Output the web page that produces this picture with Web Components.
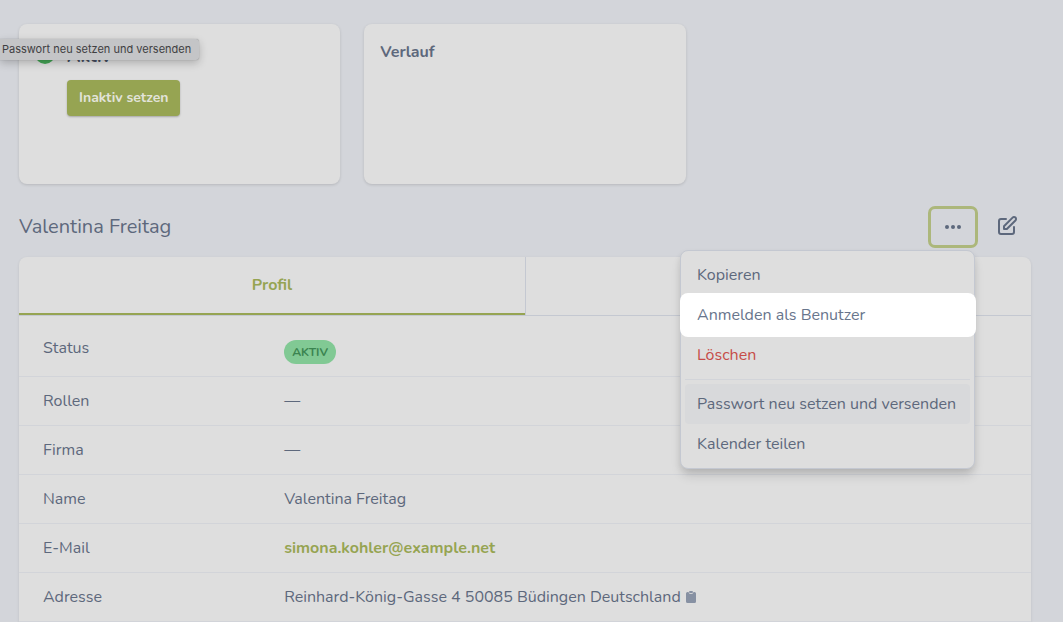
<!DOCTYPE html>
<html lang="de">
<head>
<meta charset="utf-8">
<meta name="viewport" content="width=device-width, initial-scale=1">
<title>Valentina Freitag</title>
<style>
  :root {
    --page: #d3d5da;
    --surface: #dedede;
    --ink: #5d687c;
    --accent: #96a452;
    --line: #d2d4d9;
    --line-strong: #c4c8d1;
  }
  body {
    margin: 0;
    background: var(--page);
    color: var(--ink);
    font: 400 16px/24px Nunito, "Open Sans", sans-serif;
  }
</style>
</head>
<body>
<user-page>
  <info-card slot="cards">
    <status-toggle><span>Aktiv</span><span slot="action">Inaktiv setzen</span></status-toggle>
  </info-card>
  <info-card slot="cards"><card-title>Verlauf</card-title></info-card>
  <page-header slot="header">
    Valentina Freitag
    <action-menu slot="actions"></action-menu>
    <edit-button slot="actions"></edit-button>
  </page-header>
  <tab-bar slot="panel">Profil</tab-bar>
  <profile-table slot="panel"></profile-table>
  <hint-bubble slot="hint">Passwort neu setzen und versenden</hint-bubble>
</user-page>

<script>
  function define(name, markup) {
    const template = document.createElement('template');
    template.innerHTML = markup;
    customElements.define(name, class extends HTMLElement {
      constructor() {
        super();
        this.attachShadow({ mode: 'open' }).append(template.content.cloneNode(true));
      }
    });
  }

  define('user-page', `
    <style>
      :host { display: flex; flex-direction: column; box-sizing: border-box; min-height: 100vh; padding: 24px 32px 0 19px; }
      .cards { display: grid; grid-template-columns: repeat(3, 1fr); gap: 24px; }
      main { display: contents; }
      .panel { flex: 1; background: var(--surface); border-radius: 8px 8px 0 0; box-shadow: 0 1px 3px #0000001a; }
    </style>
    <main>
      <div class="cards"><slot name="cards"></slot></div>
      <slot name="header"></slot>
      <section class="panel"><slot name="panel"></slot></section>
    </main>
    <slot name="hint"></slot>`);

  define('info-card', `
    <style>
      :host { display: block; box-sizing: border-box; min-height: 160px; padding: 16px; background: var(--surface);
        border-radius: 8px; box-shadow: 0 1px 3px #00000024; }
    </style>
    <slot></slot>`);

  define('card-title', `
    <style>
      :host { display: block; }
      h2 { margin: 0; font: inherit; font-weight: 700; }
    </style>
    <h2><slot></slot></h2>`);

  define('status-toggle', `
    <style>
      :host { display: grid; grid-template-columns: 20px 1fr; gap: 12px; padding-top: 4px; justify-items: start; }
      svg { display: block; }
      .label { color: #475062; font-size: 18px; font-weight: 700; }
      button { grid-column: 2; height: 36px; padding: 0 12px; border: 0; border-radius: 4px; background: var(--accent);
        color: #e2e3da; font: inherit; font-size: 14px; font-weight: 700; box-shadow: 0 1px 2px #00000040; }
    </style>
    <svg width="20" height="20" viewBox="0 0 20 20" aria-hidden="true">
      <circle cx="10" cy="10" r="10" fill="#45a556"/>
      <path d="M6 10l3 3 5-6" fill="none" stroke="#dedede" stroke-width="2"/>
    </svg>
    <div class="label"><slot></slot></div>
    <button type="button"><slot name="action"></slot></button>`);

  define('page-header', `
    <style>
      :host { display: flex; justify-content: space-between; min-height: 42px; margin: 22px 0 9px; }
      h1 { margin: 0; font-size: 20px; line-height: 42px; font-weight: 400; }
      .actions { display: flex; gap: 5px; }
    </style>
    <h1><slot></slot></h1>
    <div class="actions"><slot name="actions"></slot></div>`);

  define('edit-button', `
    <style>
      :host { display: block; }
      button { display: flex; align-items: center; height: 40px; padding: 0 12px; border: 0; background: none; color: inherit; }
    </style>
    <button type="button" aria-label="Bearbeiten">
      <svg width="24" height="24" viewBox="0 0 24 24" fill="none" stroke="currentColor" stroke-width="2" stroke-linecap="round" stroke-linejoin="round">
        <path d="M11 5H6a2 2 0 00-2 2v11a2 2 0 002 2h11a2 2 0 002-2v-5m-1.414-9.414a2 2 0 112.828 2.828L11.828 15H9v-2.828l8.586-8.586z"/>
      </svg>
    </button>`);

  define('menu-item', `
    <style>
      :host { display: block; position: relative; }
      button { position: relative; display: block; width: 100%; height: 40px; padding: 0 12px; border: 0; border-radius: 4px;
        background: none; color: inherit; font: inherit; text-align: left; white-space: nowrap; }
      :host([danger]) { color: #c64c48; }
      :host([hovered]) button { background: #d8d9db; }
      :host([spotlight]) { color: #68758c; }
      :host([spotlight])::before { content: ""; position: absolute; inset: -2px -6px -2px -5px; border-radius: 8px; background: #fff; }
    </style>
    <button type="button" role="menuitem"><slot></slot></button>`);

  define('action-menu', `
    <style>
      :host { display: block; position: relative; }
      .toggle { display: flex; align-items: center; justify-content: center; box-sizing: border-box; width: 50px; height: 42px;
        padding: 0; border: 3px solid #acb77b; border-radius: 7px; background: none; color: inherit; }
      .menu { position: absolute; top: 44px; right: 3px; z-index: 1; box-sizing: border-box; width: 295px; padding: 4px;
        border: 1px solid var(--line-strong); border-radius: 8px; background: var(--surface);
        box-shadow: 0 8px 12px -2px #00000024, 0 3px 6px #00000014; }
      hr { height: 1px; margin: 4px 0; border: 0; background: var(--line); }
    </style>
    <button class="toggle" type="button" aria-label="Aktionen" aria-haspopup="menu" aria-expanded="true">
      <svg width="20" height="20" viewBox="0 0 20 20" fill="currentColor">
        <circle cx="4" cy="10" r="2"/><circle cx="10" cy="10" r="2"/><circle cx="16" cy="10" r="2"/>
      </svg>
    </button>
    <div class="menu" role="menu">
      <menu-item>Kopieren</menu-item>
      <menu-item spotlight>Anmelden als Benutzer</menu-item>
      <menu-item danger>Löschen</menu-item>
      <hr>
      <menu-item hovered>Passwort neu setzen und versenden</menu-item>
      <menu-item>Kalender teilen</menu-item>
    </div>`);

  define('tab-bar', `
    <style>
      :host { display: block; }
      .tabs { display: grid; grid-template-columns: 1fr 1fr; border-bottom: 1px solid var(--line-strong); }
      button { height: 58px; padding: 0; border: 0; background: none; color: inherit; font: inherit; font-weight: 700; }
      .active { border-bottom: 2px solid var(--accent); color: var(--accent); }
      .other { border-left: 1px solid var(--line-strong); }
    </style>
    <div class="tabs" role="tablist">
      <button class="active" type="button" role="tab" aria-selected="true"><slot></slot></button>
      <button class="other" type="button" role="tab" aria-selected="false" aria-label="Weitere Angaben"></button>
    </div>`);

  define('status-badge', `
    <style>
      :host { display: inline-block; vertical-align: top; padding: 0 8px; border-radius: 12px; background: #81c994;
        color: #3b8450; font-size: 12px; font-weight: 700; }
    </style>
    <slot></slot>`);

  define('profile-table', `
    <style>
      :host { display: block; }
      table { width: 100%; border-collapse: separate; border-spacing: 0; table-layout: fixed; }
      th, td { padding: 12px 24px 12px 0; border-bottom: 1px solid var(--line); text-align: left; vertical-align: top; font-weight: 400; }
      th { box-sizing: border-box; width: 26.2%; padding-left: 24px; }
      .tall th { padding: 20px 24px 16px; }
      .tall td { padding: 24px 24px 12px 0; }
      a { color: var(--accent); font-weight: 700; text-decoration: none; }
      svg { margin-left: 1px; vertical-align: -1px; }
    </style>
    <table>
      <tr class="tall"><th scope="row">Status</th><td><status-badge>AKTIV</status-badge></td></tr>
      <tr><th scope="row">Rollen</th><td>—</td></tr>
      <tr><th scope="row">Firma</th><td>—</td></tr>
      <tr><th scope="row">Name</th><td>Valentina Freitag</td></tr>
      <tr><th scope="row">E-Mail</th><td><a href="mailto:simona.kohler@example.net">simona.kohler@example.net</a></td></tr>
      <tr><th scope="row">Adresse</th><td>Reinhard-König-Gasse 4 50085 Büdingen Deutschland
        <svg width="10" height="12" viewBox="0 0 10 12" aria-hidden="true">
          <path d="M1.500 1H2.500A2.500 2 0 0 0 7.500 1H8.500A1.500 1.500 0 0 1 10 2.500V10.500A1.500 1.500 0 0 1 8.500 12H1.500A1.500 1.500 0 0 1 0 10.500V2.500A1.500 1.500 0 0 1 1.500 1Z" fill="#8791a3"/>
          <rect x="3" y="0" width="4" height="2" rx="1" fill="#8791a3"/>
        </svg></td></tr>
    </table>`);

  define('hint-bubble', `
    <style>
      :host { position: absolute; top: 39px; left: 0; z-index: 2; padding: 0 8px 0 2px; border-radius: 0 3px 3px 0;
        background: #c4c5c7; color: #3f4042; font: 11px/21px Inter, sans-serif; white-space: nowrap;
        box-shadow: 0 0 1px #00000060, 0 3px 8px #00000038; }
    </style>
    <slot></slot>`);
</script>
</body>
</html>
